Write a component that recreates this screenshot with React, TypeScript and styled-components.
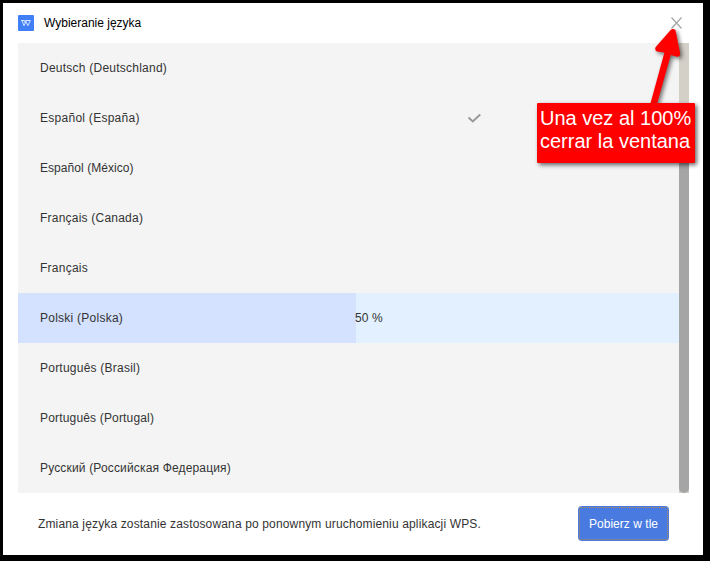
import React from 'react';
import styled, { createGlobalStyle } from 'styled-components';

const GlobalStyle = createGlobalStyle`
  * { box-sizing: border-box; }
  body { margin: 0; background: #000; font-family: "Liberation Sans", Arial, sans-serif; }
`;

const Screen = styled.div`
  position: relative;
  width: 710px;
  height: 561px;
  padding: 3px 7px 6px 3px;
  background: #000;
  overflow: hidden;
`;

const Dialog = styled.main`
  display: flex;
  flex-direction: column;
  width: 700px;
  height: 552px;
  background: #fff;
`;

const Header = styled.header`
  display: flex;
  align-items: center;
  flex: 0 0 40px;
  padding: 0 20px 0 15px;
`;

const Logo = styled.svg`
  width: 16px;
  height: 16px;
  margin-right: 10px;
`;

const Label = styled.span<{ $spacing?: number }>`
  font-size: 12px;
  line-height: 16px;
  white-space: nowrap;
  letter-spacing: ${({ $spacing = 0 }) => $spacing}px;
`;

const Title = styled(Label)`
  color: #000;
`;

const CloseButton = styled.button`
  display: flex;
  margin-left: auto;
  padding: 0;
  border: 0;
  background: none;
`;

const Content = styled.section`
  display: flex;
  width: 671px;
  height: 450px;
  margin-left: 15px;
  background: #f4f4f4;
`;

const List = styled.ul`
  flex: 1;
  margin: 0;
  padding: 0;
  list-style: none;
`;

const Row = styled.li<{ $progress?: number }>`
  display: grid;
  grid-template-columns: 315px 112px 1fr;
  align-items: center;
  height: 50px;
  padding-left: 22px;
  color: #333;
  background: ${({ $progress }) =>
    $progress ? `linear-gradient(to right, #d4e1ff ${$progress}px, #e2f0ff ${$progress}px)` : 'transparent'};
`;

const Scrollbar = styled.div`
  width: 10px;
  padding-top: 80px;
  background: #d4d0c8;
`;

const Thumb = styled.div`
  height: 370px;
  border-radius: 5px;
  background: #a5a5a5;
`;

const Footer = styled.footer`
  display: flex;
  align-items: center;
  justify-content: space-between;
  height: 62px;
  padding: 0 34px 0 35px;
  color: #333;
`;

const Action = styled.button`
  width: 91px;
  height: 35px;
  margin: -1px 0 0;
  padding: 1px;
  border: 0;
  border-radius: 4px;
  background: #497ae0;
  color: #fff;
  font-family: inherit;
`;

const FocusRing = styled.span`
  display: flex;
  align-items: center;
  justify-content: center;
  height: 33px;
  border: 1px dotted #b58c4a;
  border-radius: 2px;
`;

const Callout = styled.aside`
  position: absolute;
  left: 537px;
  top: 103px;
  width: 158px;
  height: 60px;
  padding: 4px 3px;
  border-radius: 1px;
  background: #f00;
  box-shadow: 2px 2px 4px rgba(0, 0, 0, 0.6);
  color: #fff;
`;

const CalloutLine = styled.div`
  font-size: 20px;
  line-height: 23px;
  white-space: nowrap;
`;

const Arrow = styled.svg`
  position: absolute;
  left: 640px;
  top: 20px;
  filter: drop-shadow(2px 2px 2px rgba(0, 0, 0, 0.55));
`;

type Language = { name: string; spacing: number; installed?: boolean; progress?: number; status?: string };

const languages: Language[] = [
  { name: 'Deutsch (Deutschland)', spacing: 0.24 },
  { name: 'Español (España)', spacing: 0.27, installed: true },
  { name: 'Español (México)', spacing: 0.06 },
  { name: 'Français (Canada)', spacing: 0.22 },
  { name: 'Français', spacing: 0.25 },
  { name: 'Polski (Polska)', spacing: 0.25, progress: 338, status: '50 %' },
  { name: 'Português (Brasil)', spacing: 0.23 },
  { name: 'Português (Portugal)', spacing: 0.17 },
  { name: 'Русский (Российская Федерация)', spacing: 0.16 },
];

export default function App() {
  return (
    <>
      <GlobalStyle />
      <Screen>
        <Dialog>
          <Header>
            <Logo viewBox="0 0 16 16">
              <rect width="16" height="16" rx="1" fill="#417ff9" />
              <path d="M3 5.5h3.3M4 5.5l2 5.2 2-4 1.9 4 2.4-5.2H7.4l.8 1.4M6.2 5.5l1 2.4" fill="none" stroke="#e4edff" strokeWidth=".9" strokeLinejoin="round" />
            </Logo>
            <Title $spacing={0}>Wybieranie języka</Title>
            <CloseButton aria-label="Zamknij">
              <svg width="13" height="12" viewBox="0 0 13 12">
                <path d="M1.5.5l10 11M11.5.5l-10 11" stroke="#a5a5a5" strokeWidth="1.2" />
              </svg>
            </CloseButton>
          </Header>
          <Content>
            <List>
              {languages.map(({ name, spacing, installed, progress, status }) => (
                <Row key={name} $progress={progress}>
                  <Label $spacing={spacing}>{name}</Label>
                  <Label $spacing={0.1}>{status}</Label>
                  {installed && (
                    <svg width="15" height="12" viewBox="0 0 15 12">
                      <path d="M1.5 5.5l4.3 4 7.4-7" fill="none" stroke="#999" strokeWidth="2" />
                    </svg>
                  )}
                </Row>
              ))}
            </List>
            <Scrollbar><Thumb /></Scrollbar>
          </Content>
          <Footer>
            <Label $spacing={0.145}>Zmiana języka zostanie zastosowana po ponownym uruchomieniu aplikacji WPS.</Label>
            <Action><FocusRing><Label $spacing={0.03}>Pobierz w tle</Label></FocusRing></Action>
          </Footer>
        </Dialog>
        <Arrow width="60" height="84" viewBox="0 0 60 84">
          <path d="M10.3 84L24.4 32.5L17 31.4Q14.2 30 15.7 27L30.6 10Q33 8 35.4 10L40.2 33.5Q40 37 37 36.7L30.8 35L17 84Z" fill="#f00" />
        </Arrow>
        <Callout>
          <CalloutLine>Una vez al 100%</CalloutLine>
          <CalloutLine>cerrar la ventana</CalloutLine>
        </Callout>
      </Screen>
    </>
  );
}
